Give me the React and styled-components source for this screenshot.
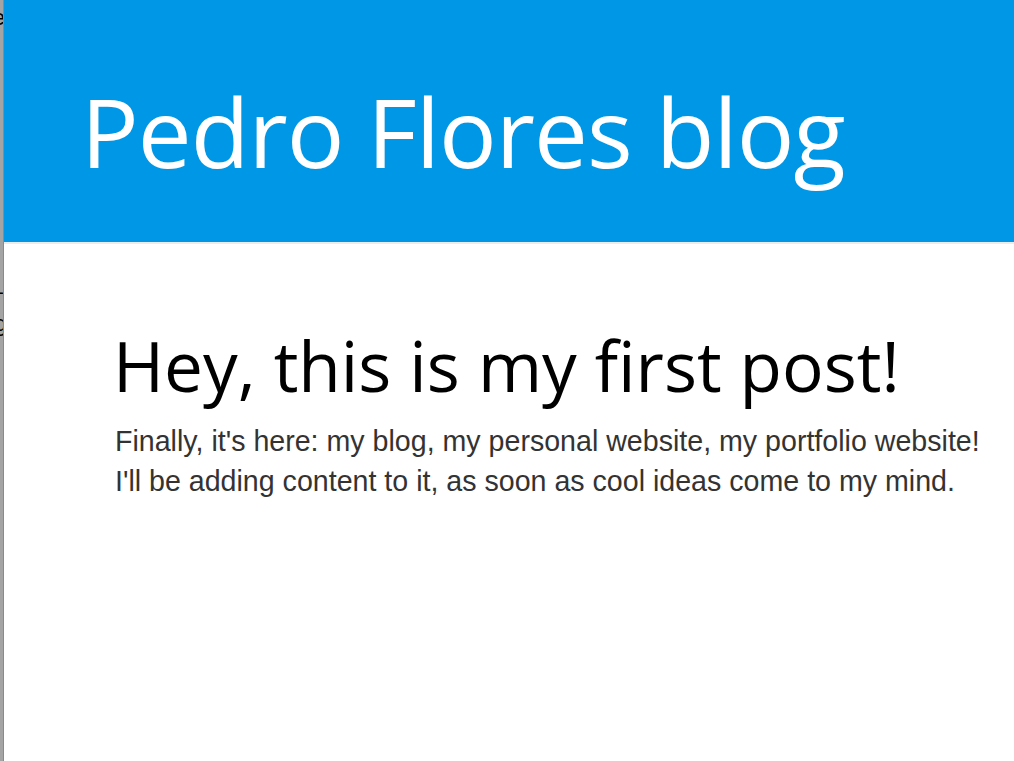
import React from "react";
import styled, { createGlobalStyle } from "styled-components";

const Global = createGlobalStyle`
  html, body { margin: 0; padding: 0; background: #fff; }
  body { width: 1014px; height: 761px; overflow: hidden; }
  #root { height: 100%; }
`;

const Screen = styled.div`
  display: flex;
  height: 761px;
  width: 1014px;
`;

const BehindStrip = styled.div`
  width: 3px;
  flex: none;
  background: #a4a4a4;
  border-right: 1px solid #8a8a8a;
  overflow: hidden;
  display: flex;
  flex-direction: column;
  align-items: flex-end;
  font-family: "Liberation Sans", Arial, sans-serif;
  font-size: 22px;
  color: #000;
`;

const BehindLine = styled.div`
  white-space: nowrap;
  margin-top: ${(p) => p.$top}px;
  line-height: 24px;
  height: 24px;
  margin-right: ${(p) => p.$shift}px;
`;

const Page = styled.div`
  flex: 1;
  display: flex;
  flex-direction: column;
  background: #fff;
`;

const Header = styled.header`
  height: 242px;
  background: #0097e6;
  border-bottom: 2px solid #ececec;
  box-sizing: content-box;
  padding: 0 0 0 77px;
`;

const Title = styled.h1`
  margin: 0;
  padding-top: 73px;
  font-family: "Open Sans", "Noto Sans", sans-serif;
  font-weight: 400;
  font-size: 96px;
  line-height: 1.2;
  color: #fff;
  letter-spacing: -1px;
`;

const Post = styled.article`
  padding: 76px 0 0 109px;
`;

const PostTitle = styled.h2`
  margin: 0;
  font-family: "Open Sans", "Noto Sans", sans-serif;
  font-weight: 400;
  font-size: 69.3px;
  line-height: 90px;
  color: #000;
`;

const PostBody = styled.p`
  margin: 11px 0 0 2px;
  font-family: "Liberation Sans", Arial, sans-serif;
  font-size: 28.6px;
  line-height: 40px;
  color: #333;
  white-space: pre-line;
`;

export default function App() {
  return (
    <>
      <Global />
      <Screen>
        <BehindStrip>
          <BehindLine $top={6} $shift={-2}>e</BehindLine>
          <BehindLine $top={250} $shift={0}>—</BehindLine>
          <BehindLine $top={8} $shift={-4}>g</BehindLine>
        </BehindStrip>
        <Page>
          <Header>
            <Title>Pedro Flores blog</Title>
          </Header>
          <Post>
            <PostTitle>Hey, this is my first post!</PostTitle>
            <PostBody>
              {"Finally, it's here: my blog, my personal website, my portfolio website!\nI'll be adding content to it, as soon as cool ideas come to my mind."}
            </PostBody>
          </Post>
        </Page>
      </Screen>
    </>
  );
}
